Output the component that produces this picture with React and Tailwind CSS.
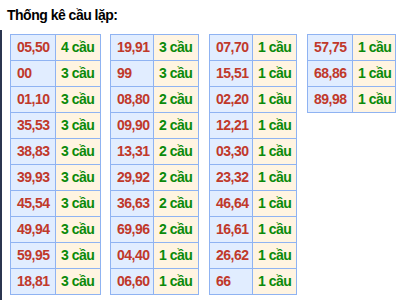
import React from 'react';

const tables = [
  {
    cols: 'grid-cols-[44px_44px]',
    ml: 'ml-[8px]',
    rows: [
      ['05,50', 4], ['00', 3], ['01,10', 3], ['35,53', 3], ['38,83', 3],
      ['39,93', 3], ['45,54', 3], ['49,94', 3], ['59,95', 3], ['18,81', 3],
    ],
  },
  {
    cols: 'grid-cols-[42px_44px]',
    ml: 'ml-[9px]',
    rows: [
      ['19,91', 3], ['99', 3], ['08,80', 2], ['09,90', 2], ['13,31', 2],
      ['29,92', 2], ['36,63', 2], ['69,96', 2], ['04,40', 1], ['06,60', 1],
    ],
  },
  {
    cols: 'grid-cols-[42px_43px]',
    ml: 'ml-[10px]',
    rows: [
      ['07,70', 1], ['15,51', 1], ['02,20', 1], ['12,21', 1], ['03,30', 1],
      ['23,32', 1], ['46,64', 1], ['16,61', 1], ['26,62', 1], ['66', 1],
    ],
  },
  {
    cols: 'grid-cols-[44px_42px]',
    ml: 'ml-[10px]',
    rows: [['57,75', 1], ['68,86', 1], ['89,98', 1]],
  },
];

const App = () => {
  return (
    <div className="w-[418px] h-[300px] bg-white overflow-hidden font-['Liberation_Sans',Arial,sans-serif]">
      <div className="h-[30px] pl-[7px] pt-[6px] text-[14px] tracking-[-0.5px] font-bold text-black leading-[18px]">
        Thống kê cầu lặp:
      </div>
      <div className="border-l-2 border-[#2b3550] h-[270px] pt-[4px] flex items-start">
        {tables.map((t, i) => (
          <div key={i} className={`grid ${t.cols} ${t.ml} gap-px p-px bg-[#8fb3f2]`}>
            {t.rows.map(([num, count]) => (
              <React.Fragment key={num}>
                <div className="h-[25px] flex items-center pl-[6px] bg-[#e1edff] text-[14px] tracking-[-0.5px] font-bold text-[#c0392b]">
                  {num}
                </div>
                <div className="h-[25px] flex items-center pl-[5px] bg-[#fff4e1] text-[14px] tracking-[-0.5px] font-bold text-[#0a8a0a]">
                  {count} cầu
                </div>
              </React.Fragment>
            ))}
          </div>
        ))}
      </div>
    </div>
  );
};

export default App;
